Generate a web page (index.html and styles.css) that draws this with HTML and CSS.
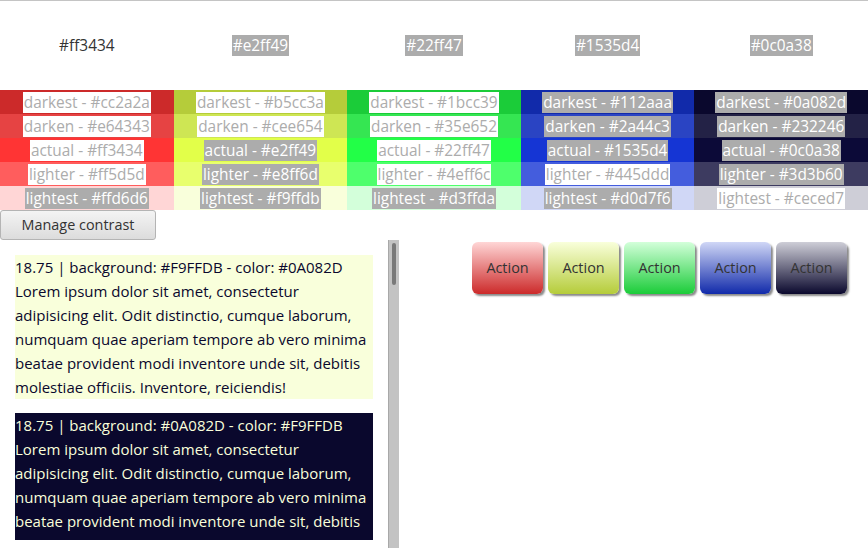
FILE: index.html
```html
<!DOCTYPE html>
<html>
<head>
<meta charset="utf-8">
<link rel="stylesheet" href="styles.css">
</head>
<body>
<div class="palette">
  <div class="col">
    <div class="col-head"><span class="head plain">#ff3434</span></div>
    <div class="swatch" style="background:#cc2a2a"><span class="tag light">darkest - #cc2a2a</span></div>
    <div class="swatch" style="background:#e64343"><span class="tag light">darken - #e64343</span></div>
    <div class="swatch" style="background:#ff3434"><span class="tag light">actual - #ff3434</span></div>
    <div class="swatch" style="background:#ff5d5d"><span class="tag light">lighter - #ff5d5d</span></div>
    <div class="swatch" style="background:#ffd6d6"><span class="tag dark">lightest - #ffd6d6</span></div>
  </div>
  <div class="col">
    <div class="col-head"><span class="head boxed">#e2ff49</span></div>
    <div class="swatch" style="background:#b5cc3a"><span class="tag light">darkest - #b5cc3a</span></div>
    <div class="swatch" style="background:#cee654"><span class="tag light">darken - #cee654</span></div>
    <div class="swatch" style="background:#e2ff49"><span class="tag dark">actual - #e2ff49</span></div>
    <div class="swatch" style="background:#e8ff6d"><span class="tag dark">lighter - #e8ff6d</span></div>
    <div class="swatch" style="background:#f9ffdb"><span class="tag dark">lightest - #f9ffdb</span></div>
  </div>
  <div class="col">
    <div class="col-head"><span class="head boxed">#22ff47</span></div>
    <div class="swatch" style="background:#1bcc39"><span class="tag light">darkest - #1bcc39</span></div>
    <div class="swatch" style="background:#35e652"><span class="tag light">darken - #35e652</span></div>
    <div class="swatch" style="background:#22ff47"><span class="tag light">actual - #22ff47</span></div>
    <div class="swatch" style="background:#4eff6c"><span class="tag light">lighter - #4eff6c</span></div>
    <div class="swatch" style="background:#d3ffda"><span class="tag dark">lightest - #d3ffda</span></div>
  </div>
  <div class="col">
    <div class="col-head"><span class="head boxed">#1535d4</span></div>
    <div class="swatch" style="background:#112aaa"><span class="tag dark">darkest - #112aaa</span></div>
    <div class="swatch" style="background:#2a44c3"><span class="tag dark">darken - #2a44c3</span></div>
    <div class="swatch" style="background:#1535d4"><span class="tag dark">actual - #1535d4</span></div>
    <div class="swatch" style="background:#445ddd"><span class="tag light">lighter - #445ddd</span></div>
    <div class="swatch" style="background:#d0d7f6"><span class="tag dark">lightest - #d0d7f6</span></div>
  </div>
  <div class="col">
    <div class="col-head"><span class="head boxed">#0c0a38</span></div>
    <div class="swatch" style="background:#0a082d"><span class="tag dark">darkest - #0a082d</span></div>
    <div class="swatch" style="background:#232246"><span class="tag dark">darken - #232246</span></div>
    <div class="swatch" style="background:#0c0a38"><span class="tag dark">actual - #0c0a38</span></div>
    <div class="swatch" style="background:#3d3b60"><span class="tag dark">lighter - #3d3b60</span></div>
    <div class="swatch" style="background:#ceced7"><span class="tag light">lightest - #ceced7</span></div>
  </div>
</div>

<button class="manage">Manage contrast</button>

<div class="bottom">
  <div class="list-pane">
    <div class="list">
      <div class="sample sample-light">
        <div>18.75 | background: #F9FFDB - color: #0A082D</div>
        <p>Lorem ipsum dolor sit amet, consectetur adipisicing elit. Odit distinctio, cumque laborum, numquam quae aperiam tempore ab vero minima beatae provident modi inventore unde sit, debitis molestiae officiis. Inventore, reiciendis!</p>
      </div>
      <div class="sample sample-dark">
        <div>18.75 | background: #0A082D - color: #F9FFDB</div>
        <p>Lorem ipsum dolor sit amet, consectetur adipisicing elit. Odit distinctio, cumque laborum, numquam quae aperiam tempore ab vero minima beatae provident modi inventore unde sit, debitis molestiae officiis. Inventore, reiciendis!</p>
      </div>
    </div>
    <div class="scrollbar"><div class="thumb"></div></div>
  </div>
  <div class="actions">
    <button class="action act-red">Action</button>
    <button class="action act-yellow">Action</button>
    <button class="action act-green">Action</button>
    <button class="action act-blue">Action</button>
    <button class="action act-dark">Action</button>
  </div>
</div>
</body>
</html>
```

FILE: styles.css
```css
html, body {
  margin: 0;
  padding: 0;
  background: #fff;
  overflow: hidden;
}
body {
  font-family: "Open Sans", "DejaVu Sans", sans-serif;
  border-top: 1px solid #c4c4c4;
  height: 547px;
}
.palette {
  display: grid;
  grid-template-columns: repeat(5, 1fr);
}
.col {
  display: flex;
  flex-direction: column;
}
.col-head {
  height: 89px;
  display: flex;
  align-items: center;
  justify-content: center;
}
.head {
  font-size: 15.4px;
  line-height: 21px;
  padding: 0 1px;
}
.head.plain {
  color: #333;
}
.head.boxed {
  background: #acacac;
  color: #fff;
}
.swatch {
  height: 24px;
  display: flex;
  align-items: center;
  justify-content: center;
}
.tag {
  font-size: 15.4px;
  line-height: 21px;
  padding: 0 1px;
  white-space: nowrap;
}
.tag.light {
  background: #fff;
  color: #acacac;
}
.tag.dark {
  background: #acacac;
  color: #fff;
}
.manage {
  display: block;
  margin: 0;
  width: 156px;
  height: 30px;
  border: 1px solid #b4b4b4;
  border-radius: 3px;
  background: linear-gradient(#f4f4f4, #dcdcdc);
  font-family: "Open Sans", "DejaVu Sans", sans-serif;
  font-size: 14.4px;
  color: #333;
  padding: 0 0 1px 0;
}
.bottom {
  display: flex;
  height: 308px;
}
.list-pane {
  width: 400px;
  height: 308px;
  display: flex;
  flex: none;
}
.list {
  width: 358px;
  height: 285px;
  margin: 15px 15px 8px 15px;
  overflow: hidden;
}
.sample {
  font-size: 15px;
  line-height: 24px;
  margin-bottom: 14px;
}
.sample p {
  margin: 0;
}
.sample-light {
  background: #f9ffdb;
  color: #0a082d;
}
.sample-dark {
  background: #0a082d;
  color: #f9ffdb;
}
.scrollbar {
  width: 11px;
  background: #c3c3c3;
  border-left: 1px solid #a8a8a8;
  padding: 3px 3px 0 3px;
  box-sizing: border-box;
}
.thumb {
  height: 42px;
  background: #797979;
  border-radius: 3px;
}
.actions {
  display: flex;
  align-items: flex-start;
  gap: 5px;
  padding: 2px 0 0 72px;
}
.action {
  width: 71px;
  height: 52px;
  border: none;
  border-radius: 6px;
  box-shadow: 2px 2px 2px #8a8a8a;
  font-family: "Open Sans", "DejaVu Sans", sans-serif;
  font-size: 14.4px;
  color: #333;
  padding: 0 0 2px 0;
}
.act-red { background: linear-gradient(#ffd6d6, #cc2a2a); }
.act-yellow { background: linear-gradient(#f9ffdb, #b5cc3a); }
.act-green { background: linear-gradient(#d3ffda, #1bcc39); }
.act-blue { background: linear-gradient(#d0d7f6, #112aaa); }
.act-dark { background: linear-gradient(#ceced7, #0a082d); }
```
